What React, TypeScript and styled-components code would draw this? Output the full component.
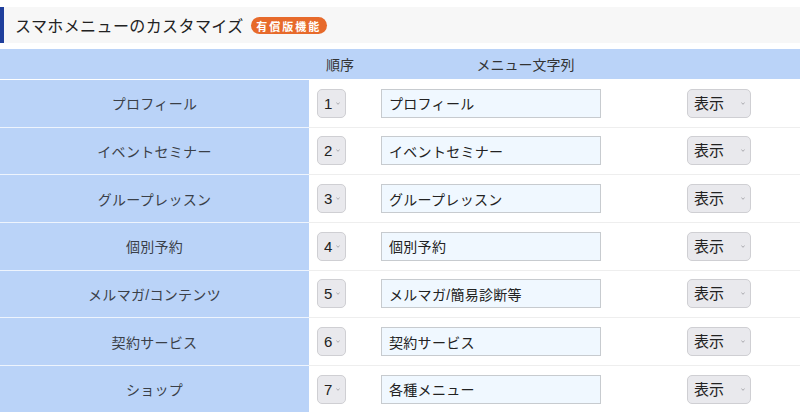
import React from 'react'
import styled, { createGlobalStyle } from 'styled-components'

const GlobalStyle = createGlobalStyle`
  html, body {
    margin: 0;
    padding: 0;
    background: #ffffff;
    font-family: "Liberation Sans", "Noto Sans CJK JP", sans-serif;
    color: #333333;
  }
`

const Page = styled.div`
  width: 800px;
  padding-top: 7px;
`

const TitleBar = styled.h2`
  margin: 0;
  height: 36px;
  display: flex;
  align-items: center;
  gap: 7px;
  padding-left: 11px;
  background: #f7f7f7;
  border-left: 4px solid #1f3f9c;
  box-sizing: border-box;
  font-size: 16px;
  font-weight: normal;
  letter-spacing: 0.4px;
  color: #222222;
`

const Badge = styled.span`
  display: inline-flex;
  align-items: center;
  justify-content: center;
  height: 17px;
  width: 76px;
  border-radius: 9px;
  background: #e76a2b;
  color: #ffffff;
  font-size: 11px;
  font-weight: bold;
  letter-spacing: 2px;
  margin-top: 1px;
`

const Table = styled.table`
  margin-top: 6px;
  width: 800px;
  border-collapse: collapse;
  table-layout: fixed;
  font-size: 14px;
`

const HeadCell = styled.th`
  height: 30px;
  padding: 0;
  background: #bad3f8;
  font-weight: normal;
  color: #333333;
  text-align: center;
  border-bottom: 1px solid #ffffff;
`

const Row = styled.tr`
  height: 47.67px;
`

const LabelCell = styled.th`
  padding: 0;
  background: #bad3f8;
  font-weight: normal;
  text-align: center;
  color: #3a3f48;
  letter-spacing: 0.3px;
  border-bottom: 1px solid #eef4fd;
`

const Cell = styled.td<{ $pad: number }>`
  padding: 0 0 0 ${(p) => p.$pad}px;
  border-bottom: 1px solid #eeeeee;
  vertical-align: middle;
`

const SelectWrap = styled.div<{ $w: number }>`
  position: relative;
  width: ${(p) => p.$w}px;
  height: 29px;
`

const Select = styled.select`
  appearance: none;
  -webkit-appearance: none;
  width: 100%;
  height: 100%;
  margin: 0;
  padding: 0 0 0 6px;
  box-sizing: border-box;
  border: 1px solid #cfcfd3;
  border-radius: 5px;
  background: #e9e9ed;
  color: #222222;
  font-family: inherit;
  font-size: 15px;
  outline: none;
`

const Chevron = styled.svg`
  position: absolute;
  right: 6px;
  top: 13px;
  width: 4px;
  height: 3px;
  pointer-events: none;
`

const TextInput = styled.input`
  width: 220px;
  height: 29px;
  margin: 0;
  padding: 0 7px;
  box-sizing: border-box;
  border: 1px solid #c7cbcf;
  background: #f0f8ff;
  color: #222222;
  font-family: inherit;
  font-size: 14px;
  letter-spacing: 0.3px;
  outline: none;
`

const items = [
  { label: 'プロフィール', text: 'プロフィール' },
  { label: 'イベントセミナー', text: 'イベントセミナー' },
  { label: 'グループレッスン', text: 'グループレッスン' },
  { label: '個別予約', text: '個別予約' },
  { label: 'メルマガ/コンテンツ', text: 'メルマガ/簡易診断等' },
  { label: '契約サービス', text: '契約サービス' },
  { label: 'ショップ', text: '各種メニュー' },
]

function Arrow() {
  return (
    <Chevron viewBox="0 0 4 3">
      <path d="M0.4 0.5 L2 2.3 L3.6 0.5" fill="none" stroke="#9a9a9f" strokeWidth="0.8" />
    </Chevron>
  )
}

export default function App() {
  return (
    <Page>
      <GlobalStyle />
      <TitleBar>
        スマホメニューのカスタマイズ
        <Badge>有償版機能</Badge>
      </TitleBar>
      <Table>
        <colgroup>
          <col style={{ width: 309 }} />
          <col style={{ width: 62 }} />
          <col style={{ width: 309 }} />
          <col style={{ width: 120 }} />
        </colgroup>
        <thead>
          <tr>
            <HeadCell />
            <HeadCell>順序</HeadCell>
            <HeadCell>メニュー文字列</HeadCell>
            <HeadCell />
          </tr>
        </thead>
        <tbody>
          {items.map((it, i) => (
            <Row key={it.label}>
              <LabelCell>{it.label}</LabelCell>
              <Cell $pad={8}>
                <SelectWrap $w={29}>
                  <Select defaultValue={String(i + 1)}>
                    {items.map((_, n) => (
                      <option key={n} value={String(n + 1)}>
                        {n + 1}
                      </option>
                    ))}
                  </Select>
                  <Arrow />
                </SelectWrap>
              </Cell>
              <Cell $pad={10}>
                <TextInput defaultValue={it.text} />
              </Cell>
              <Cell $pad={7}>
                <SelectWrap $w={64}>
                  <Select defaultValue="show">
                    <option value="show">表示</option>
                    <option value="hide">非表示</option>
                  </Select>
                  <Arrow />
                </SelectWrap>
              </Cell>
            </Row>
          ))}
        </tbody>
      </Table>
    </Page>
  )
}
